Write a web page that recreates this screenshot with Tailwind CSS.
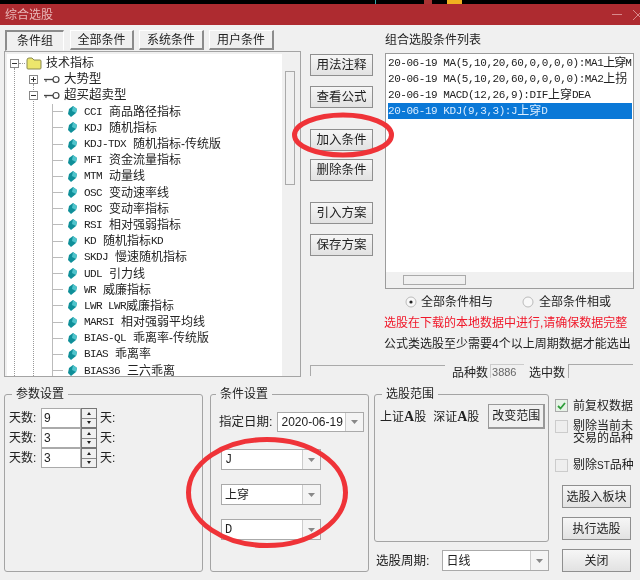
<!DOCTYPE html>
<html lang="zh">
<head>
<meta charset="utf-8">
<script src="https://cdn.jsdelivr.net/npm/@tailwindcss/browser@4"></script>
<title>综合选股</title>
</head>
<body class="m-0">
<div class="relative flex h-[580px] w-[640px] flex-col overflow-hidden bg-[#f0f0f0] text-[12px] leading-[16px] text-[#222] blur-[0.5px] font-['Liberation_Sans','Noto_Sans_CJK_SC',sans-serif]">

  <!-- strip of the window behind -->
  <div class="flex h-[4px] shrink-0 bg-black">
    <div class="ml-[375px] h-full w-[1px] bg-[#3aa]"></div>
    <div class="ml-[48px] h-full w-[8px] bg-[#a33]"></div>
    <div class="ml-[15px] h-full w-[15px] bg-[#f0b020]"></div>
  </div>

  <!-- title bar -->
  <div class="flex h-[21px] shrink-0 items-center justify-between bg-[#ae2b30] pl-[5px] pr-0 text-[12px] text-[#e8b8b8]">
    <span>综合选股</span>
    <div class="flex items-center gap-[11px] text-[#d88a8c]">
      <div class="h-[1px] w-[10px] bg-[#d88a8c]"></div>
      <svg width="7" height="12" viewBox="0 0 7 12"><path d="M0 1 L10 11 M10 1 L0 11" stroke="#d88a8c" fill="none"/></svg>
    </div>
  </div>

  <!-- top section -->
  <div class="flex h-[361px] shrink-0">
    <!-- left: tabs + tree -->
    <div class="ml-[4px] flex w-[297px] flex-col">
      <div class="mt-[5px] flex h-[21px] pl-[1px]">
        <div class="flex h-[21px] w-[59px] items-center justify-center border border-t-2 border-l-2 border-t-[#8c8c8c] border-l-[#8c8c8c] border-r-white border-b-[#f0f0f0]">条件组</div>
        <div class="ml-[6px] flex h-[20px] w-[64px] items-center justify-center border-r-2 border-b-2 border-r-[#8c8c8c] border-b-[#8c8c8c] border-t border-l border-t-white border-l-white">全部条件</div>
        <div class="ml-[5px] flex h-[20px] w-[65px] items-center justify-center border-r-2 border-b-2 border-r-[#8c8c8c] border-b-[#8c8c8c] border-t border-l border-t-white border-l-white">系统条件</div>
        <div class="ml-[5px] flex h-[20px] w-[65px] items-center justify-center border-r-2 border-b-2 border-r-[#8c8c8c] border-b-[#8c8c8c] border-t border-l border-t-white border-l-white">用户条件</div>
      </div>
      <div class="flex h-[326px] border border-[#a4a4a4] p-[2px] pb-0 pr-0">
        <!-- tree -->
        <div class="relative h-full w-[275px] bg-white pt-[1px]">
          <div class="absolute left-[7px] top-[14px] bottom-0 border-l border-dotted border-[#999]"></div>
          <div class="absolute left-[26px] top-[30px] bottom-0 border-l border-dotted border-[#999]"></div>
          <div class="absolute left-[45px] top-[50px] bottom-0 border-l border-[#bbb]"></div>

          <div class="flex h-[16.2px] items-center pl-[3px]">
            <div class="relative z-10 flex h-[9px] w-[9px] items-center justify-center border border-[#888] bg-white"><div class="h-[1px] w-[5px] bg-[#333]"></div></div>
            <div class="h-[1px] w-[6px] border-t border-dotted border-[#999]"></div>
            <svg class="ml-[1px]" width="16" height="13" viewBox="0 0 16 13"><path d="M1 3 Q1 1 3 1 H6 L8 3 H14 Q15 3 15 4 V11 Q15 12 14 12 H2 Q1 12 1 11Z" fill="#ece66c" stroke="#8a8a50"/></svg>
            <span class="ml-[4px] text-[12px]">技术指标</span>
          </div>
          <div class="flex h-[16.2px] items-center pl-[22px]">
            <div class="relative z-10 flex h-[9px] w-[9px] items-center justify-center border border-[#888] bg-white text-[10px] leading-none">
              <svg width="5" height="5" viewBox="0 0 5 5"><path d="M0 2.5H5M2.5 0V5" stroke="#333"/></svg>
            </div>
            <svg class="ml-[6px]" width="16" height="9" viewBox="0 0 16 9"><path d="M0 4.5H9" stroke="#444" stroke-width="1.3"/><path d="M2 4.5V7" stroke="#444"/><circle cx="12" cy="4.5" r="3" fill="#fff" stroke="#444" stroke-width="1.2"/></svg>
            <span class="ml-[4px] text-[12.5px]">大势型</span>
          </div>
          <div class="flex h-[16.2px] items-center pl-[22px]">
            <div class="relative z-10 flex h-[9px] w-[9px] items-center justify-center border border-[#888] bg-white"><div class="h-[1px] w-[5px] bg-[#333]"></div></div>
            <svg class="ml-[6px]" width="16" height="9" viewBox="0 0 16 9"><path d="M0 4.5H9" stroke="#444" stroke-width="1.3"/><path d="M2 4.5V7" stroke="#444"/><circle cx="12" cy="4.5" r="3" fill="#fff" stroke="#444" stroke-width="1.2"/></svg>
            <span class="ml-[4px] text-[12.5px]">超买超卖型</span>
          </div>

          <div class="flex h-[16.2px] items-center whitespace-pre pl-[46px]">
            <div class="h-[1px] w-[10px] bg-[#bbb]"></div>
            <svg class="ml-[5px]" width="9" height="11" viewBox="0 0 9 11"><path d="M5 0 L9 3 L8 7 L3 11 L0 8 L1 3Z" fill="#0f8f99"/><path d="M5 0 L9 3 L8 7 L4 5Z" fill="#4fc4cc"/></svg>
            <span class="ml-[7px] font-['Liberation_Mono'] text-[11px] tracking-[-0.6px]">CCI </span><span class="ml-[1px]">商品路径指标</span>
          </div>
          <div class="flex h-[16.2px] items-center whitespace-pre pl-[46px]">
            <div class="h-[1px] w-[10px] bg-[#bbb]"></div>
            <svg class="ml-[5px]" width="9" height="11" viewBox="0 0 9 11"><path d="M5 0 L9 3 L8 7 L3 11 L0 8 L1 3Z" fill="#0f8f99"/><path d="M5 0 L9 3 L8 7 L4 5Z" fill="#4fc4cc"/></svg>
            <span class="ml-[7px] font-['Liberation_Mono'] text-[11px] tracking-[-0.6px]">KDJ </span><span class="ml-[1px]">随机指标</span>
          </div>
          <div class="flex h-[16.2px] items-center whitespace-pre pl-[46px]">
            <div class="h-[1px] w-[10px] bg-[#bbb]"></div>
            <svg class="ml-[5px]" width="9" height="11" viewBox="0 0 9 11"><path d="M5 0 L9 3 L8 7 L3 11 L0 8 L1 3Z" fill="#0f8f99"/><path d="M5 0 L9 3 L8 7 L4 5Z" fill="#4fc4cc"/></svg>
            <span class="ml-[7px] font-['Liberation_Mono'] text-[11px] tracking-[-0.6px]">KDJ-TDX </span><span class="ml-[1px]">随机指标-传统版</span>
          </div>
          <div class="flex h-[16.2px] items-center whitespace-pre pl-[46px]">
            <div class="h-[1px] w-[10px] bg-[#bbb]"></div>
            <svg class="ml-[5px]" width="9" height="11" viewBox="0 0 9 11"><path d="M5 0 L9 3 L8 7 L3 11 L0 8 L1 3Z" fill="#0f8f99"/><path d="M5 0 L9 3 L8 7 L4 5Z" fill="#4fc4cc"/></svg>
            <span class="ml-[7px] font-['Liberation_Mono'] text-[11px] tracking-[-0.6px]">MFI </span><span class="ml-[1px]">资金流量指标</span>
          </div>
          <div class="flex h-[16.2px] items-center whitespace-pre pl-[46px]">
            <div class="h-[1px] w-[10px] bg-[#bbb]"></div>
            <svg class="ml-[5px]" width="9" height="11" viewBox="0 0 9 11"><path d="M5 0 L9 3 L8 7 L3 11 L0 8 L1 3Z" fill="#0f8f99"/><path d="M5 0 L9 3 L8 7 L4 5Z" fill="#4fc4cc"/></svg>
            <span class="ml-[7px] font-['Liberation_Mono'] text-[11px] tracking-[-0.6px]">MTM </span><span class="ml-[1px]">动量线</span>
          </div>
          <div class="flex h-[16.2px] items-center whitespace-pre pl-[46px]">
            <div class="h-[1px] w-[10px] bg-[#bbb]"></div>
            <svg class="ml-[5px]" width="9" height="11" viewBox="0 0 9 11"><path d="M5 0 L9 3 L8 7 L3 11 L0 8 L1 3Z" fill="#0f8f99"/><path d="M5 0 L9 3 L8 7 L4 5Z" fill="#4fc4cc"/></svg>
            <span class="ml-[7px] font-['Liberation_Mono'] text-[11px] tracking-[-0.6px]">OSC </span><span class="ml-[1px]">变动速率线</span>
          </div>
          <div class="flex h-[16.2px] items-center whitespace-pre pl-[46px]">
            <div class="h-[1px] w-[10px] bg-[#bbb]"></div>
            <svg class="ml-[5px]" width="9" height="11" viewBox="0 0 9 11"><path d="M5 0 L9 3 L8 7 L3 11 L0 8 L1 3Z" fill="#0f8f99"/><path d="M5 0 L9 3 L8 7 L4 5Z" fill="#4fc4cc"/></svg>
            <span class="ml-[7px] font-['Liberation_Mono'] text-[11px] tracking-[-0.6px]">ROC </span><span class="ml-[1px]">变动率指标</span>
          </div>
          <div class="flex h-[16.2px] items-center whitespace-pre pl-[46px]">
            <div class="h-[1px] w-[10px] bg-[#bbb]"></div>
            <svg class="ml-[5px]" width="9" height="11" viewBox="0 0 9 11"><path d="M5 0 L9 3 L8 7 L3 11 L0 8 L1 3Z" fill="#0f8f99"/><path d="M5 0 L9 3 L8 7 L4 5Z" fill="#4fc4cc"/></svg>
            <span class="ml-[7px] font-['Liberation_Mono'] text-[11px] tracking-[-0.6px]">RSI </span><span class="ml-[1px]">相对强弱指标</span>
          </div>
          <div class="flex h-[16.2px] items-center whitespace-pre pl-[46px]">
            <div class="h-[1px] w-[10px] bg-[#bbb]"></div>
            <svg class="ml-[5px]" width="9" height="11" viewBox="0 0 9 11"><path d="M5 0 L9 3 L8 7 L3 11 L0 8 L1 3Z" fill="#0f8f99"/><path d="M5 0 L9 3 L8 7 L4 5Z" fill="#4fc4cc"/></svg>
            <span class="ml-[7px] font-['Liberation_Mono'] text-[11px] tracking-[-0.6px]">KD </span><span class="ml-[1px]">随机指标</span><span class="font-['Liberation_Mono'] text-[11px] tracking-[-0.6px]">KD</span>
          </div>
          <div class="flex h-[16.2px] items-center whitespace-pre pl-[46px]">
            <div class="h-[1px] w-[10px] bg-[#bbb]"></div>
            <svg class="ml-[5px]" width="9" height="11" viewBox="0 0 9 11"><path d="M5 0 L9 3 L8 7 L3 11 L0 8 L1 3Z" fill="#0f8f99"/><path d="M5 0 L9 3 L8 7 L4 5Z" fill="#4fc4cc"/></svg>
            <span class="ml-[7px] font-['Liberation_Mono'] text-[11px] tracking-[-0.6px]">SKDJ </span><span class="ml-[1px]">慢速随机指标</span>
          </div>
          <div class="flex h-[16.2px] items-center whitespace-pre pl-[46px]">
            <div class="h-[1px] w-[10px] bg-[#bbb]"></div>
            <svg class="ml-[5px]" width="9" height="11" viewBox="0 0 9 11"><path d="M5 0 L9 3 L8 7 L3 11 L0 8 L1 3Z" fill="#0f8f99"/><path d="M5 0 L9 3 L8 7 L4 5Z" fill="#4fc4cc"/></svg>
            <span class="ml-[7px] font-['Liberation_Mono'] text-[11px] tracking-[-0.6px]">UDL </span><span class="ml-[1px]">引力线</span>
          </div>
          <div class="flex h-[16.2px] items-center whitespace-pre pl-[46px]">
            <div class="h-[1px] w-[10px] bg-[#bbb]"></div>
            <svg class="ml-[5px]" width="9" height="11" viewBox="0 0 9 11"><path d="M5 0 L9 3 L8 7 L3 11 L0 8 L1 3Z" fill="#0f8f99"/><path d="M5 0 L9 3 L8 7 L4 5Z" fill="#4fc4cc"/></svg>
            <span class="ml-[7px] font-['Liberation_Mono'] text-[11px] tracking-[-0.6px]">WR </span><span class="ml-[1px]">威廉指标</span>
          </div>
          <div class="flex h-[16.2px] items-center whitespace-pre pl-[46px]">
            <div class="h-[1px] w-[10px] bg-[#bbb]"></div>
            <svg class="ml-[5px]" width="9" height="11" viewBox="0 0 9 11"><path d="M5 0 L9 3 L8 7 L3 11 L0 8 L1 3Z" fill="#0f8f99"/><path d="M5 0 L9 3 L8 7 L4 5Z" fill="#4fc4cc"/></svg>
            <span class="ml-[7px] font-['Liberation_Mono'] text-[11px] tracking-[-0.6px]">LWR LWR</span><span>威廉指标</span>
          </div>
          <div class="flex h-[16.2px] items-center whitespace-pre pl-[46px]">
            <div class="h-[1px] w-[10px] bg-[#bbb]"></div>
            <svg class="ml-[5px]" width="9" height="11" viewBox="0 0 9 11"><path d="M5 0 L9 3 L8 7 L3 11 L0 8 L1 3Z" fill="#0f8f99"/><path d="M5 0 L9 3 L8 7 L4 5Z" fill="#4fc4cc"/></svg>
            <span class="ml-[7px] font-['Liberation_Mono'] text-[11px] tracking-[-0.6px]">MARSI </span><span class="ml-[1px]">相对强弱平均线</span>
          </div>
          <div class="flex h-[16.2px] items-center whitespace-pre pl-[46px]">
            <div class="h-[1px] w-[10px] bg-[#bbb]"></div>
            <svg class="ml-[5px]" width="9" height="11" viewBox="0 0 9 11"><path d="M5 0 L9 3 L8 7 L3 11 L0 8 L1 3Z" fill="#0f8f99"/><path d="M5 0 L9 3 L8 7 L4 5Z" fill="#4fc4cc"/></svg>
            <span class="ml-[7px] font-['Liberation_Mono'] text-[11px] tracking-[-0.6px]">BIAS-QL </span><span class="ml-[1px]">乖离率-传统版</span>
          </div>
          <div class="flex h-[16.2px] items-center whitespace-pre pl-[46px]">
            <div class="h-[1px] w-[10px] bg-[#bbb]"></div>
            <svg class="ml-[5px]" width="9" height="11" viewBox="0 0 9 11"><path d="M5 0 L9 3 L8 7 L3 11 L0 8 L1 3Z" fill="#0f8f99"/><path d="M5 0 L9 3 L8 7 L4 5Z" fill="#4fc4cc"/></svg>
            <span class="ml-[7px] font-['Liberation_Mono'] text-[11px] tracking-[-0.6px]">BIAS </span><span class="ml-[1px]">乖离率</span>
          </div>
          <div class="flex h-[14.3px] items-center whitespace-pre pl-[46px] pt-[2px] leading-[12px]">
            <div class="h-[1px] w-[10px] bg-[#bbb]"></div>
            <svg class="ml-[5px]" width="9" height="11" viewBox="0 0 9 11"><path d="M5 0 L9 3 L8 7 L3 11 L0 8 L1 3Z" fill="#0f8f99"/><path d="M5 0 L9 3 L8 7 L4 5Z" fill="#4fc4cc"/></svg>
            <span class="ml-[7px] font-['Liberation_Mono'] text-[11px] tracking-[-0.6px]">BIAS36 </span><span class="ml-[1px]">三六乖离</span>
          </div>
        </div>
        <!-- tree scrollbar -->
        <div class="ml-[3px] mt-[17px] h-[114px] w-[10px] border border-[#aaa] bg-[#f0f0f0]"></div>
      </div>
    </div>

    <!-- right part -->
    <div class="ml-[9px] flex w-[324px] flex-col">
      <div class="flex h-[327px]">
        <div class="flex w-[63px] shrink-0 flex-col items-center pt-[29px]">
          <div class="flex h-[22px] w-[63px] items-center justify-center border border-[#8f8f8f] bg-gradient-to-b from-[#f6f6f6] to-[#e2e2e2] text-[12.5px]">用法注释</div>
          <div class="mt-[10px] flex h-[22px] w-[63px] items-center justify-center border border-[#8f8f8f] bg-gradient-to-b from-[#f6f6f6] to-[#e2e2e2] text-[12.5px]">查看公式</div>
          <div class="mt-[21px] flex h-[22px] w-[63px] items-center justify-center border border-[#8f8f8f] bg-gradient-to-b from-[#f6f6f6] to-[#e2e2e2] text-[12.5px]">加入条件</div>
          <div class="mt-[8px] flex h-[22px] w-[63px] items-center justify-center border border-[#8f8f8f] bg-gradient-to-b from-[#f6f6f6] to-[#e2e2e2] text-[12.5px]">删除条件</div>
          <div class="mt-[21px] flex h-[22px] w-[63px] items-center justify-center border border-[#8f8f8f] bg-gradient-to-b from-[#f6f6f6] to-[#e2e2e2] text-[12.5px]">引入方案</div>
          <div class="mt-[10px] flex h-[22px] w-[63px] items-center justify-center border border-[#8f8f8f] bg-gradient-to-b from-[#f6f6f6] to-[#e2e2e2] text-[12.5px]">保存方案</div>
        </div>
        <div class="ml-[12px] flex w-[249px] flex-col">
          <div class="mt-[7px] h-[16px]">组合选股条件列表</div>
          <div class="mt-[5px] flex h-[237px] flex-col border border-[#9c9c9c] bg-white">
            <div class="flex-1 pt-[1px] pl-[2px] pr-[1px]">
              <div class="flex h-[16px] items-center overflow-hidden whitespace-pre"><span class="font-['Liberation_Mono'] text-[11px] tracking-[-0.45px]">20-06-19 MA(5,10,20,60,0,0,0,0):MA1</span><span class="tracking-[-1px]">上穿</span><span class="font-['Liberation_Mono'] text-[11px] tracking-[-0.45px]">M</span></div>
              <div class="flex h-[16px] items-center whitespace-pre"><span class="font-['Liberation_Mono'] text-[11px] tracking-[-0.45px]">20-06-19 MA(5,10,20,60,0,0,0,0):MA2</span><span>上拐</span></div>
              <div class="flex h-[16px] items-center whitespace-pre"><span class="font-['Liberation_Mono'] text-[11px] tracking-[-0.45px]">20-06-19 MACD(12,26,9):DIF</span><span>上穿</span><span class="font-['Liberation_Mono'] text-[11px] tracking-[-0.45px]">DEA</span></div>
              <div class="flex h-[16px] items-center whitespace-pre bg-[#0a78d7] text-[#d8ecff]"><span class="font-['Liberation_Mono'] text-[11px] tracking-[-0.45px]">20-06-19 KDJ(9,3,3):J</span><span>上穿</span><span class="font-['Liberation_Mono'] text-[11px] tracking-[-0.45px]">D</span></div>
            </div>
            <div class="h-[16px] shrink-0 bg-[#f0f0f0] pl-[17px] pt-[3px]">
              <div class="h-[10px] w-[63px] border border-[#aaa]"></div>
            </div>
          </div>
          <div class="mt-[5px] flex h-[16px] items-center">
            <svg class="ml-[20px]" width="12" height="12" viewBox="0 0 12 12"><circle cx="6" cy="6" r="5" fill="#f8f8f8" stroke="#bbb"/><circle cx="6" cy="6" r="1.6" fill="#222"/></svg>
            <span class="ml-[4px]">全部条件相与</span>
            <svg class="ml-[29px]" width="12" height="12" viewBox="0 0 12 12"><circle cx="6" cy="6" r="5" fill="#f8f8f8" stroke="#bbb"/></svg>
            <span class="ml-[5px]">全部条件相或</span>
          </div>
          <div class="ml-[-1px] mt-[5px] h-[16px] whitespace-nowrap text-[#f0182a]">选股在下载的本地数据中进行,请确保数据完整</div>
          <div class="ml-[-1px] mt-[5px] h-[16px] whitespace-nowrap">公式类选股至少需要4个以上周期数据才能选出</div>
        </div>
      </div>
      <!-- status row -->
      <div class="flex h-[30px] items-start">
        <div class="mt-[13px] h-[11px] w-[135px] border-l border-t border-[#aaa]"></div>
        <span class="ml-[7px] mt-[13px]">品种数</span>
        <div class="ml-[2px] mt-[12px] h-[14px] w-[34px] border-t border-l border-[#ccc] pl-[1px] text-[11px] leading-[15px] text-[#666]">3886</div>
        <span class="ml-[5px] mt-[13px]">选中数</span>
        <div class="ml-[3px] mt-[12px] h-[14px] w-[65px] border-l border-t border-[#aaa]"></div>
      </div>
    </div>
  </div>

  <!-- bottom section -->
  <div class="flex flex-1">
    <fieldset class="ml-[4px] h-[186px] w-[199px] rounded-[3px] border border-[#a4a4a4] px-[4px]">
      <legend class="ml-[3px] h-[16px] px-[4px]">参数设置</legend>
      <div class="mt-[6px] flex h-[20px] items-center">
        <span class="w-[32px]">天数:</span>
        <div class="flex h-[20px] w-[40px] items-center border border-[#aaa] bg-white pl-[2px]">9</div>
        <div class="flex h-[20px] w-[16px] flex-col border border-[#777] bg-[#f0f0f0]"><svg class="h-[9px] w-full" viewBox="0 0 14 9"><path d="M7 3L9 6H5Z" fill="#222"/></svg><div class="h-[1px] bg-[#888]"></div><svg class="h-[8px] w-full" viewBox="0 0 14 8"><path d="M5 2H9L7 5Z" fill="#222"/></svg></div>
        <span class="ml-[3px]">天:</span>
      </div>
      <div class="flex h-[20px] items-center">
        <span class="w-[32px]">天数:</span>
        <div class="flex h-[20px] w-[40px] items-center border border-[#aaa] bg-white pl-[2px]">3</div>
        <div class="flex h-[20px] w-[16px] flex-col border border-[#777] bg-[#f0f0f0]"><svg class="h-[9px] w-full" viewBox="0 0 14 9"><path d="M7 3L9 6H5Z" fill="#222"/></svg><div class="h-[1px] bg-[#888]"></div><svg class="h-[8px] w-full" viewBox="0 0 14 8"><path d="M5 2H9L7 5Z" fill="#222"/></svg></div>
        <span class="ml-[3px]">天:</span>
      </div>
      <div class="flex h-[20px] items-center">
        <span class="w-[32px]">天数:</span>
        <div class="flex h-[20px] w-[40px] items-center border border-[#aaa] bg-white pl-[2px]">3</div>
        <div class="flex h-[20px] w-[16px] flex-col border border-[#777] bg-[#f0f0f0]"><svg class="h-[9px] w-full" viewBox="0 0 14 9"><path d="M7 3L9 6H5Z" fill="#222"/></svg><div class="h-[1px] bg-[#888]"></div><svg class="h-[8px] w-full" viewBox="0 0 14 8"><path d="M5 2H9L7 5Z" fill="#222"/></svg></div>
        <span class="ml-[3px]">天:</span>
      </div>
    </fieldset>

    <fieldset class="ml-[7px] h-[186px] w-[159px] rounded-[3px] border border-[#a4a4a4] pl-[8px]">
      <legend class="ml-[-3px] h-[16px] px-[4px]">条件设置</legend>
      <div class="mt-[10px] flex h-[20px] items-center">
        <span class="whitespace-nowrap text-[12.5px]">指定日期:</span>
        <div class="ml-[5px] flex h-[20px] w-[87px] items-center border border-[#aaa] bg-white pl-[3px] text-[12px]">
          <span class="flex-1">2020-06-19</span>
          <div class="flex h-full w-[18px] items-center justify-center border-l border-[#ccc] bg-[#f4f4f4]"><svg width="7" height="4" viewBox="0 0 7 4"><path d="M0 0H7L3.5 4Z" fill="#888"/></svg></div>
        </div>
      </div>
      <div class="ml-[2px] mt-[17px] flex h-[21px] w-[100px] items-center border border-[#aaa] bg-white pl-[3px]">
        <span class="flex-1 font-['Liberation_Mono']">J</span>
        <div class="flex h-full w-[18px] items-center justify-center border-l border-[#ccc] bg-[#f4f4f4]"><svg width="7" height="4" viewBox="0 0 7 4"><path d="M0 0H7L3.5 4Z" fill="#888"/></svg></div>
      </div>
      <div class="ml-[2px] mt-[14px] flex h-[21px] w-[100px] items-center border border-[#aaa] bg-white pl-[3px]">
        <span class="flex-1">上穿</span>
        <div class="flex h-full w-[18px] items-center justify-center border-l border-[#ccc] bg-[#f4f4f4]"><svg width="7" height="4" viewBox="0 0 7 4"><path d="M0 0H7L3.5 4Z" fill="#888"/></svg></div>
      </div>
      <div class="ml-[2px] mt-[14px] flex h-[21px] w-[100px] items-center border border-[#aaa] bg-white pl-[3px]">
        <span class="flex-1 font-['Liberation_Mono']">D</span>
        <div class="flex h-full w-[18px] items-center justify-center border-l border-[#ccc] bg-[#f4f4f4]"><svg width="7" height="4" viewBox="0 0 7 4"><path d="M0 0H7L3.5 4Z" fill="#888"/></svg></div>
      </div>
    </fieldset>

    <div class="ml-[5px] flex w-[175px] flex-col">
      <fieldset class="h-[156px] w-[175px] rounded-[3px] border border-[#a4a4a4] pl-[5px]">
        <legend class="ml-[2px] h-[16px] px-[4px]">选股范围</legend>
        <div class="mt-[2px] flex h-[25px] items-center whitespace-nowrap">
          <span>上证<b class="font-['Liberation_Serif'] text-[14px]">A</b>股</span>
          <span class="ml-[7px]">深证<b class="font-['Liberation_Serif'] text-[14px]">A</b>股</span>
          <div class="ml-[9px] flex h-[25px] w-[57px] items-center justify-center border border-b-2 border-r-2 border-[#999] bg-[#f0f0f0] text-[12px]">改变范围</div>
        </div>
      </fieldset>
      <div class="mt-[8px] flex h-[21px] items-center pl-[2px]">
        <span class="w-[66px] text-[12.5px]">选股周期:</span>
        <div class="flex h-[21px] w-[108px] items-center border border-[#aaa] bg-white pl-[4px]">
          <span class="flex-1">日线</span>
          <div class="flex h-full w-[18px] items-center justify-center border-l border-[#ccc] bg-[#f4f4f4]"><svg width="7" height="4" viewBox="0 0 7 4"><path d="M0 0H7L3.5 4Z" fill="#888"/></svg></div>
        </div>
      </div>
    </div>

    <div class="ml-[6px] flex w-[80px] flex-col pt-[13px]">
      <div class="flex h-[13px] items-center">
        <div class="flex h-[13px] w-[13px] items-center justify-center border border-[#aaa] bg-[#e6f2e6]"><svg width="9" height="8" viewBox="0 0 9 8"><path d="M1 4L3.5 6.5L8 1" fill="none" stroke="#2e9e3a" stroke-width="1.8"/></svg></div>
        <span class="ml-[5px] whitespace-nowrap">前复权数据</span>
      </div>
      <div class="mt-[8px] flex h-[13px] items-start">
        <div class="h-[13px] w-[13px] shrink-0 border border-[#ccc] bg-[#eee]"></div>
        <div class="ml-[5px] whitespace-nowrap">
          <div class="h-[12px] leading-[12px]">剔除当前未</div>
          <div class="h-[12px] leading-[12px]">交易的品种</div>
        </div>
      </div>
      <div class="mt-[26px] flex h-[13px] items-center">
        <div class="h-[13px] w-[13px] shrink-0 border border-[#ccc] bg-[#eee]"></div>
        <span class="ml-[5px] whitespace-nowrap">剔除<span class="text-[10px]">ST</span>品种</span>
      </div>
      <div class="ml-[7px] mt-[13px] flex h-[23px] w-[69px] items-center justify-center border border-[#8f8f8f] bg-gradient-to-b from-[#f6f6f6] to-[#e2e2e2]">选股入板块</div>
      <div class="ml-[7px] mt-[9px] flex h-[23px] w-[69px] items-center justify-center border border-[#8f8f8f] bg-gradient-to-b from-[#f6f6f6] to-[#e2e2e2]">执行选股</div>
      <div class="ml-[7px] mt-[9px] flex h-[23px] w-[69px] items-center justify-center border border-[#8f8f8f] bg-gradient-to-b from-[#f6f6f6] to-[#e2e2e2]">关闭</div>
    </div>
  </div>

  <!-- hand-drawn red annotations over the dialog -->
  <svg class="pointer-events-none absolute left-0 top-0" width="640" height="580" viewBox="0 0 640 580">
    <ellipse cx="343" cy="135" rx="48.5" ry="20" fill="none" stroke="#ef3338" stroke-width="5"/>
    <ellipse cx="267" cy="492.5" rx="78.5" ry="53" fill="none" stroke="#ef3338" stroke-width="5"/>
  </svg>
</div>
</body>
</html>
